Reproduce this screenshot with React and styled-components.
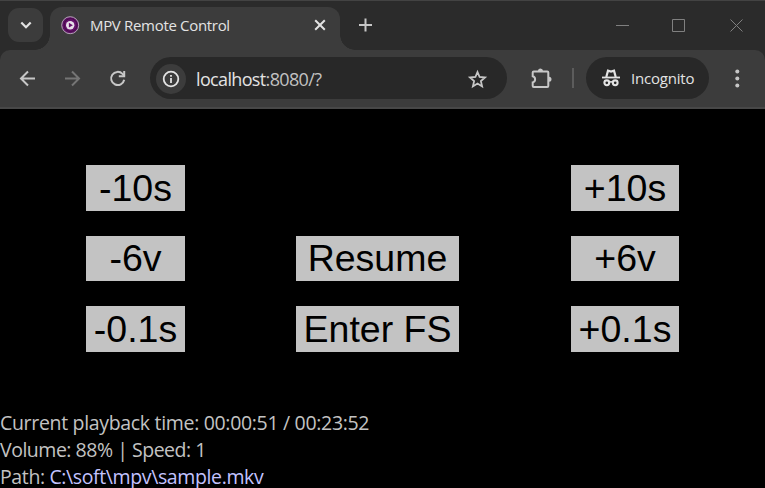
import React from "react";
import styled, { createGlobalStyle } from "styled-components";

const GlobalStyle = createGlobalStyle`
  * { box-sizing: border-box; }
  body { margin: 0; background: #000; overflow: hidden; font-family: "Open Sans", "Noto Sans", sans-serif; }
`;

const Window = styled.div`
  width: 765px;
  height: 488px;
  display: flex;
  flex-direction: column;
  background: #000;
`;

const TabStrip = styled.header`
  height: 50px;
  flex: none;
  display: flex;
  background: #2b2b2b;
  border-top: 1px solid #434343;
`;

const TabSearch = styled.button`
  width: 35px;
  height: 34px;
  margin: 7px 7px 0 8px;
  padding: 0;
  border: 0;
  border-radius: 11px;
  background: #3c3c3c;
  display: grid;
  place-items: center;
`;

const Tab = styled.div`
  position: relative;
  width: 290px;
  height: 43px;
  margin-top: 6px;
  padding: 0 13px 7px 11px;
  display: flex;
  align-items: center;
  background: #3c3c3c;
  border-radius: 12px 12px 0 0;

  &::before,
  &::after {
    content: "";
    position: absolute;
    bottom: 0;
    width: 15px;
    height: 15px;
  }
  &::before {
    right: 100%;
    background: radial-gradient(circle at 0 0, transparent 14.5px, #3c3c3c 15px);
  }
  &::after {
    left: 100%;
    background: radial-gradient(circle at 100% 0, transparent 14.5px, #3c3c3c 15px);
  }
`;

const TabTitle = styled.span`
  flex: 1;
  margin-left: 10px;
  color: #e3e3e3;
  font-size: 15px;
  line-height: 20px;
  letter-spacing: -0.32px;
  white-space: nowrap;
`;

const NewTab = styled.div`
  margin: 17px 0 0 18px;
`;

const WindowControls = styled.div`
  display: flex;
  gap: 43px;
  margin: 18px 22px 0 auto;

  & > :last-child { margin-left: 2px; }
`;

const ToolbarBack = styled.div`
  height: 59px;
  flex: none;
  background: #2b2b2b;
`;

const Toolbar = styled.nav`
  height: 59px;
  padding-bottom: 1px;
  display: flex;
  align-items: center;
  background: #3c3c3c;
  border-radius: 10px 10px 0 0;
  border-bottom: 2px solid #484848;
`;

const NavButtons = styled.div`
  display: flex;
  gap: 21px;
  margin-left: 16px;
`;

const AddressBar = styled.div`
  width: 357px;
  height: 42px;
  margin-left: 20px;
  padding: 1px 17px 0 6px;
  display: flex;
  align-items: center;
  background: #282828;
  border-radius: 21px;
`;

const InfoButton = styled.span`
  width: 30px;
  height: 30px;
  display: grid;
  place-items: center;
  border-radius: 50%;
  background: #3c3c3c;
`;

const Address = styled.span`
  flex: 1;
  margin-left: 10px;
  padding-top: 2px;
  color: #e3e3e3;
  font-size: 18px;
  line-height: 25px;
  letter-spacing: -0.65px;
  white-space: nowrap;
`;

const Port = styled.span`
  color: #c2c2c2;
`;

const Extensions = styled.div`
  height: 24px;
  margin-left: 22px;
`;

const Separator = styled.div`
  width: 2px;
  height: 20px;
  margin: 0 12px 0 19px;
  background: #5c5c5c;
`;

const IncognitoChip = styled.div`
  width: 123px;
  height: 42px;
  padding-left: 15px;
  display: flex;
  align-items: center;
  gap: 10px;
  border-radius: 21px;
  background: #282828;
  color: #e3e3e3;
  font-size: 15px;
  letter-spacing: -0.2px;
`;

const MenuButton = styled.div`
  height: 20px;
  margin-left: 18px;
`;

const Icon = styled.svg`
  display: block;
  flex: none;
  overflow: visible;
`;

const Page = styled.main`
  flex: 1;
  min-height: 0;
  display: flex;
  flex-direction: column;
`;

const Controls = styled.div`
  display: grid;
  grid-template-columns: 99px 163px 108px;
  grid-template-rows: 46px 45px 46px;
  row-gap: 25px;
  column-gap: 111px;
  margin: 56px 0 0 86px;
`;

const ControlButton = styled.button`
  grid-column: ${(p) => p.$col};
  grid-row: ${(p) => p.$row};
  margin-left: ${(p) => (p.$col === 3 ? "1px" : 0)};
  margin-right: ${(p) => (p.$col === 3 ? "-1px" : 0)};
  padding: 0;
  border: 0;
  border-radius: 0;
  background: #c3c3c3;
  color: #000;
  font: 37.5px / 45px "Liberation Sans", Arial, sans-serif;
  white-space: nowrap;
`;

const Status = styled.div`
  margin-top: 57px;
  color: #c3c3c3;
  font-family: "Open Sans", "Noto Sans", sans-serif;
  font-size: 19.5px;
  line-height: 27px;
`;

const StatusLine = styled.div`
  letter-spacing: ${(p) => p.$spacing}px;
  white-space: nowrap;
`;

const PathValue = styled.span`
  color: #c3c3ff;
`;

const buttons = [
  { label: "-10s", col: 1, row: 1 },
  { label: "+10s", col: 3, row: 1 },
  { label: "-6v", col: 1, row: 2 },
  { label: "Resume", col: 2, row: 2 },
  { label: "+6v", col: 3, row: 2 },
  { label: "-0.1s", col: 1, row: 3 },
  { label: "Enter FS", col: 2, row: 3 },
  { label: "+0.1s", col: 3, row: 3 },
];

function Favicon() {
  return (
    <Icon width="19" height="19" viewBox="0 0 19 19">
      <circle cx="9.2" cy="9.2" r="8.5" fill="#5b1263" stroke="#b7a4b9" strokeWidth="1" />
      <circle cx="9.6" cy="9" r="6.4" fill="#65106b" stroke="#440846" strokeWidth=".8" />
      <circle cx="9.2" cy="9.2" r="4.2" fill="#e8dfe9" />
      <path d="M7.9 6.8v4.8l4-2.4z" fill="#65106b" />
    </Icon>
  );
}

function Back() {
  return (
    <Icon width="24" height="24" viewBox="0 0 24 24" fill="none" stroke="#c7c7c7" strokeWidth="2">
      <path d="M19 12.5H5.3M12 5.5l-7 7 7 7" />
    </Icon>
  );
}

function Forward() {
  return (
    <Icon width="24" height="24" viewBox="0 0 24 24" fill="none" stroke="#757575" strokeWidth="2">
      <path d="M4 12.5h13.7M11 5.5l7 7-7 7" />
    </Icon>
  );
}

function Reload() {
  return (
    <Icon width="24" height="24" viewBox="0 0 24 24" fill="none" stroke="#c7c7c7" strokeWidth="2">
      <path d="M18.2 13.8A6.6 6.6 0 1 1 16.5 7.9L18.5 10" />
      <path d="M18.2 5v5.3h-5.4" />
    </Icon>
  );
}

function Incognito() {
  return (
    <Icon width="20" height="18" viewBox="0 0 20 18" fill="none" stroke="#e3e3e3">
      <path d="M1 8.5h18" strokeWidth="1.8" />
      <path d="M5.3 8L7 1.7l3 .8 3-.8L14.7 8" strokeWidth="2.2" />
      <circle cx="5.8" cy="13.8" r="2.4" strokeWidth="2.1" />
      <circle cx="14.2" cy="13.8" r="2.4" strokeWidth="2.1" />
      <path d="M8 13.3q2-1 4 0" strokeWidth="1.5" />
    </Icon>
  );
}

export default function App() {
  return (
    <Window>
      <GlobalStyle />
      <TabStrip>
        <TabSearch aria-label="Search tabs">
          <Icon width="12" height="8" viewBox="0 0 12 8" fill="none" stroke="#e3e3e3" strokeWidth="2.2">
            <path d="M1.3 1.5L6 6.2l4.7-4.7" />
          </Icon>
        </TabSearch>
        <Tab>
          <Favicon />
          <TabTitle>MPV Remote Control</TabTitle>
          <Icon width="14" height="14" viewBox="0 0 14 14" stroke="#e3e3e3" strokeWidth="2">
            <path d="M2.2 2.2l9.6 9.6M11.8 2.2l-9.6 9.6" />
          </Icon>
        </Tab>
        <NewTab>
          <Icon width="14" height="14" viewBox="0 0 14 14" stroke="#c7c7c7" strokeWidth="2">
            <path d="M7.5 .5v13M1 7h13" />
          </Icon>
        </NewTab>
        <WindowControls>
          <Icon width="13" height="13" viewBox="0 0 13 13" stroke="#808080">
            <path d="M0 6.5h13" />
          </Icon>
          <Icon width="13" height="13" viewBox="0 0 13 13" fill="none" stroke="#808080">
            <path d="M.5.5h12v12H.5z" />
          </Icon>
          <Icon width="13" height="13" viewBox="0 0 13 13" stroke="#808080">
            <path d="M.5.5l12 12M12.5.5l-12 12" />
          </Icon>
        </WindowControls>
      </TabStrip>
      <ToolbarBack>
        <Toolbar>
          <NavButtons>
            <Back />
            <Forward />
            <Reload />
          </NavButtons>
          <AddressBar>
            <InfoButton>
              <Icon width="18" height="18" viewBox="0 0 18 18" fill="none" stroke="#e3e3e3" strokeWidth="1.8">
                <circle cx="9" cy="9" r="7.3" />
                <path d="M9 8v5M9 5v1.8" />
              </Icon>
            </InfoButton>
            <Address>localhost<Port>:8080/?</Port></Address>
            <Icon width="24" height="24" viewBox="0 0 24 24" fill="none" stroke="#c7c7c7" strokeWidth="1.8">
              <path d="M11.5 5l2.1 5 5.4.5-4.1 3.6 1.2 5.3-4.6-2.8-4.6 2.8 1.2-5.3L4 10.5l5.4-.5z" />
            </Icon>
          </AddressBar>
          <Extensions>
            <Icon width="24" height="24" viewBox="0 0 24 24" fill="none" stroke="#c7c7c7" strokeWidth="2">
              <path d="M4.7 5.5h13.6a1 1 0 0 1 1 1v13.6a1 1 0 0 1-1 1H4.7a1 1 0 0 1-1-1v-3.7a3.2 3.2 0 0 0 0-6.2V6.5a1 1 0 0 1 1-1z" />
              <path d="M9 5a2.5 2.5 0 0 1 5 0zM20 10.8a2.5 2.5 0 0 1 0 5z" fill="#c7c7c7" stroke="none" />
            </Icon>
          </Extensions>
          <Separator />
          <IncognitoChip>
            <Incognito />
            <span>Incognito</span>
          </IncognitoChip>
          <MenuButton>
            <Icon width="20" height="20" viewBox="0 0 20 20" fill="#c7c7c7">
              <circle cx="10.3" cy="3.5" r="2" />
              <circle cx="10.3" cy="10.5" r="2" />
              <circle cx="10.3" cy="17.5" r="2" />
            </Icon>
          </MenuButton>
        </Toolbar>
      </ToolbarBack>
      <Page>
        <Controls>
          {buttons.map((b) => (
            <ControlButton key={b.label} $col={b.col} $row={b.row}>{b.label}</ControlButton>
          ))}
        </Controls>
        <Status>
          <StatusLine $spacing={-0.32}>Current playback time: 00:00:51 / 00:23:52</StatusLine>
          <StatusLine $spacing={-0.48}>Volume: 88% | Speed: 1</StatusLine>
          <StatusLine $spacing={-0.38}>Path: <PathValue>C:\soft\mpv\sample.mkv</PathValue></StatusLine>
        </Status>
      </Page>
    </Window>
  );
}
